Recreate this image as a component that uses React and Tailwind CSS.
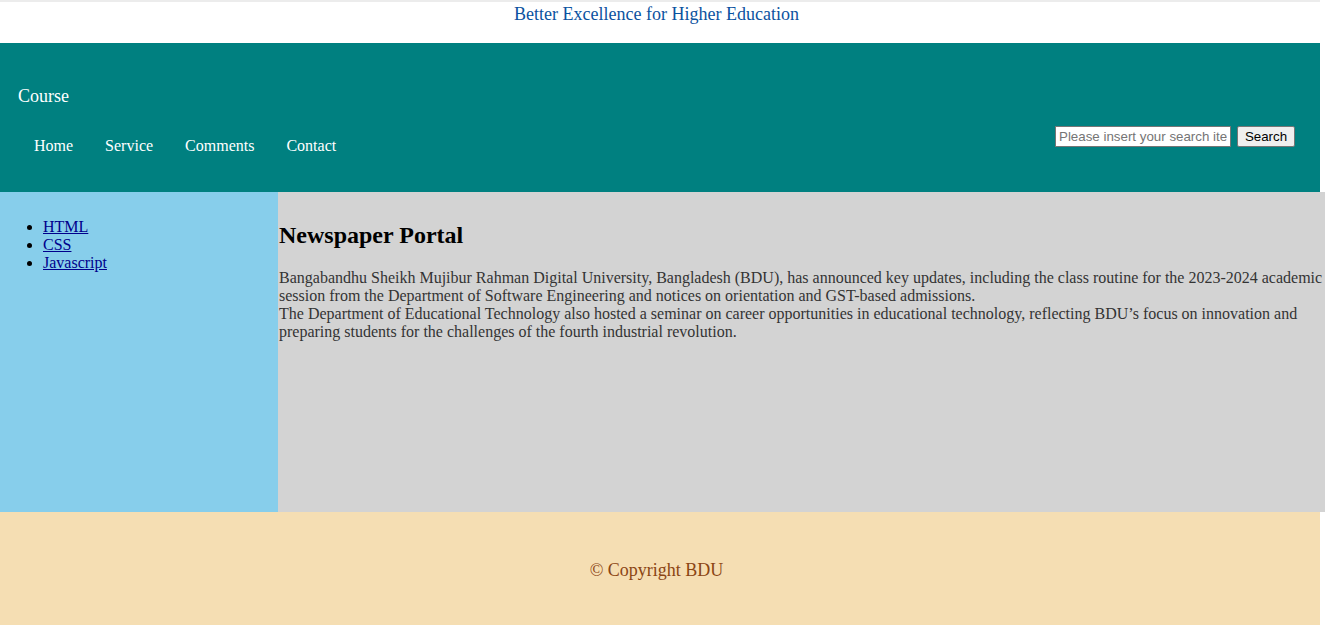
import React from 'react';

const navItems = ['Home', 'Service', 'Comments', 'Contact'];
const topics = ['HTML', 'CSS', 'Javascript'];

const App = () => {
  return (
    <div className="w-[1325px] h-[625px] overflow-hidden bg-white font-['Liberation_Serif','Times_New_Roman',serif]">
      <div className="w-[1320px]">
        <div className="h-[43px] border-t-2 border-[#ececec] pt-[2px] pr-[7px] text-center text-[18px] leading-[20px] text-[#0b52a0]">
          Better Excellence for Higher Education
        </div>

        <header className="h-[149px] bg-[#008080] flex justify-between pl-[18px] pr-[25px] text-white">
          <div className="pt-[43px]">
            <h1 className="text-[18px] leading-[21px]">Course</h1>
            <ul className="flex mt-[30px] text-[16px] leading-[18px]">
              {navItems.map((item) => (
                <li key={item} className="px-4">
                  <a href="#" className="text-white">{item}</a>
                </li>
              ))}
            </ul>
          </div>
          <form className="flex items-center gap-[6px] pt-[83px] h-fit font-['Liberation_Sans',Arial,sans-serif]">
            <input
              type="text"
              placeholder="Please insert your search item"
              className="w-[176px] h-[21px] bg-white border border-[#767676] px-[3px] text-[13.33px] text-black placeholder:text-[#757575] outline-none"
            />
            <button
              type="button"
              className="w-[58px] h-[21px] bg-[#efefef] border border-[#767676] rounded-[2px] text-[13.33px] text-black"
            >
              Search
            </button>
          </form>
        </header>
      </div>

      <div className="flex w-[1340px] h-[320px]">
        <aside className="w-[278px] shrink-0 bg-[#87ceeb] pt-[10px]">
          <ul className="list-disc pl-[43px] mt-[16px] text-[16px] leading-[18px]">
            {topics.map((t) => (
              <li key={t}>
                <a href="#" className="underline text-[#00008b]">{t}</a>
              </li>
            ))}
          </ul>
        </aside>
        <main className="w-[1062px] shrink-0 bg-[#d3d3d3] pt-[29px] pl-px">
          <div className="w-[1048px]">
            <h2 className="text-[24px] font-bold leading-[28px] text-black">Newspaper Portal</h2>
            <p className="mt-[20px] text-[16px] leading-[18px] text-[#333]">
              Bangabandhu Sheikh Mujibur Rahman Digital University, Bangladesh (BDU), has announced key updates, including the class routine for the 2023-2024 academic session from the Department of Software Engineering and notices on orientation and GST-based admissions.
              <br />
              The Department of Educational Technology also hosted a seminar on career opportunities in educational technology, reflecting BDU’s focus on innovation and preparing students for the challenges of the fourth industrial revolution.
            </p>
          </div>
        </main>
      </div>

      <footer className="w-[1320px] h-[120px] bg-[#f5deb3] pt-[48px] pr-[7px] text-center text-[18px] leading-[21px] text-[#8b4513]">
        © Copyright BDU
      </footer>
    </div>
  );
};

export default App;
